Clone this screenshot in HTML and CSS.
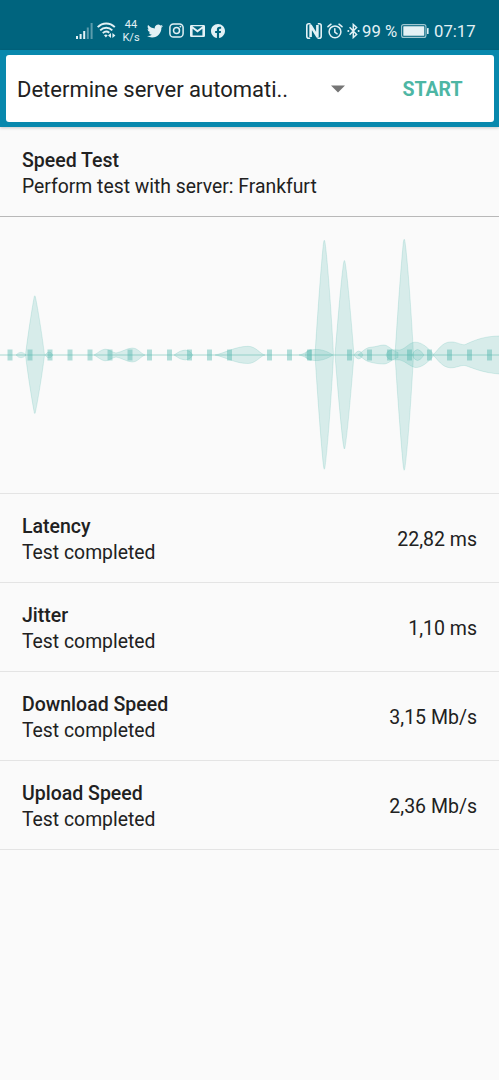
FILE: index.html
```html
<!DOCTYPE html>
<html lang="en">

<head>
  <meta charset="UTF-8">
  <meta name="viewport" content="width=device-width,initial-scale=1.0">
  <title>Speed Test</title>
  <link rel="stylesheet" href="styles.css">
</head>

<body>
  <div class="status-bar">
    <div class="status-left">
      <svg class="signal" width="17" height="16" viewBox="0 0 17 16">
        <path d="M0 13h2v3H0zM3.6 11h2v5h-2zM7.2 8h2v8h-2z" />
        <path d="M10.8 4.5h2V16h-2zM14.6 0h2v16h-2z" opacity=".4" />
      </svg>
      <svg class="wifi" width="19" height="17" viewBox="0 0 19 17">
        <g fill="none" stroke="currentColor" stroke-width="1.9">
          <path d="M.7 5.2C5.5.3 12.9.3 17.8 5.2" />
          <path d="M3.2 8.3c3.5-3.5 8.6-3.5 12.1 0" />
          <path d="M5.8 11.2c2-2 4.6-2 6.5-.5" />
        </g>
        <path d="M7 13.3c1.2-1.2 2.5-1.2 3.7 0l-1.8 2.2zM14 11v5l-3-2.5zM15.4 11v5l3-2.5z" />
      </svg>
      <div class="net-speed"><span>44</span><span>K/s</span></div>
      <svg class="twitter" width="16" height="14" viewBox="0 2 24 20">
        <path d="M23.95 4.57a10 10 0 0 1-2.82.77 4.96 4.96 0 0 0 2.16-2.72c-.95.55-2 .96-3.13 1.18a4.92 4.92 0 0 0-8.38 4.48C7.69 8.1 4.07 6.13 1.64 3.16a4.82 4.82 0 0 0-.67 2.48c0 1.7.87 3.2 2.19 4.1a4.9 4.9 0 0 1-2.23-.62v.06a4.92 4.92 0 0 0 3.95 4.83 5 5 0 0 1-2.21.08 4.94 4.94 0 0 0 4.6 3.42A9.87 9.87 0 0 1 0 19.54a14 14 0 0 0 7.55 2.21c9.05 0 14-7.5 14-13.98 0-.21 0-.42-.02-.63a9.94 9.94 0 0 0 2.46-2.55z" />
      </svg>
      <svg class="instagram" width="15" height="15" viewBox="0 0 15 15">
        <g fill="none" stroke="currentColor" stroke-width="1.5">
          <rect x=".9" y=".9" width="13.2" height="13.2" rx="3.6" />
          <circle cx="7.5" cy="7.5" r="3" />
        </g>
        <circle cx="11.4" cy="3.6" r=".95" />
      </svg>
      <svg class="gmail" width="15" height="12" viewBox="0 0 15 12">
        <path fill-rule="evenodd" d="M1.3 0h12.4Q15 0 15 1.3v9.4q0 1.3-1.3 1.3H1.3Q0 12 0 10.7V1.3Q0 0 1.3 0zM2.4 1.2l5.1 3.9 5.1-3.9zM2.6 3.7v6.8h9.8V3.7L7.5 7.4z" />
      </svg>
      <svg class="facebook" width="14" height="14" viewBox="0 0 24 24">
        <path d="M24 12.07C24 5.4 18.6 0 12 0S0 5.4 0 12.07c0 6.03 4.39 11.02 10.13 11.93v-8.44H7.08v-3.49h3.05V9.41c0-3.02 1.79-4.69 4.53-4.69 1.31 0 2.68.24 2.68.24v2.97h-1.51c-1.49 0-1.96.93-1.96 1.89v2.25h3.33l-.53 3.49h-2.8V24C19.61 23.1 24 18.1 24 12.07z" />
      </svg>
    </div>
    <div class="status-right">
      <svg class="nfc" width="16" height="16" viewBox="0 0 16 16">
        <g fill="none" stroke="currentColor">
          <path stroke-width="1.6" d="M4.2 15.2H2.8Q.8 15.2.8 13.2V2.8Q.8.8 2.8.8H4.5M11.8.8h1.4q2 0 2 2v10.4q0 2-2 2H11.5" />
          <path stroke-width="2.6" stroke-linejoin="round" d="M4.6 14V2.5L11.4 13.5V2" />
        </g>
      </svg>
      <svg class="alarm" width="16" height="16" viewBox="0 0 16 16">
        <g fill="none" stroke="currentColor" stroke-width="1.5" stroke-linecap="round">
          <circle cx="8" cy="8.8" r="5.9" />
          <path d="M7.8 5.7v3.4l2.3 1.7M1 3.7L4 1.2M15 3.7L12 1.2" />
        </g>
      </svg>
      <svg class="bluetooth" width="13" height="16" viewBox="0 0 13 16">
        <path fill="none" stroke="currentColor" stroke-width="1.5" d="M2.6 4.3l7 7.2-3.3 3V1.5l3.3 3-7 7.2" />
        <circle cx="1.3" cy="8" r="1" />
        <circle cx="11.6" cy="8" r="1" />
      </svg>
      <span class="battery-level">99 %</span>
      <svg class="battery" width="28" height="14" viewBox="0 0 28 14">
        <rect x=".6" y=".6" width="24.3" height="12.8" rx="2" fill="none" stroke="currentColor" stroke-width="1.1" opacity=".7" />
        <rect x="2.3" y="2.3" width="21" height="9.4" rx=".5" />
        <rect x="26" y="4" width="1.6" height="6" rx=".5" />
      </svg>
      <span class="time">07:17</span>
    </div>
  </div>

  <div class="toolbar">
    <div class="server-card">
      <span class="server-name">Determine server automati..</span>
      <svg class="arrow" width="14" height="8" viewBox="0 0 14 8">
        <path d="M0 .5h14L7 7.5z" />
      </svg>
      <button class="start-button">START</button>
    </div>
  </div>

  <div class="intro">
    <div class="title">Speed Test</div>
    <div class="text">Perform test with server: Frankfurt</div>
  </div>

  <svg class="chart" width="499" height="276" viewBox="0 217 499 276">
    <path class="axis" d="M0 355H499" />
    <!-- sample markers -->
    <path class="marker" d="M10 349.5v11M30 349.5v11M50 349.5v11M70 349.5v11M90 349.5v11M110 349.5v11M130 349.5v11M149.5 349.5v11M169.5 349.5v11M189.5 349.5v11M209.5 349.5v11M229.5 349.5v11M269.5 349.5v11M289.5 349.5v11M309.5 349.5v11M349.5 349.5v11M369.5 349.5v11M389.5 349.5v11M409.5 349.5v11M429.5 349.5v11M449.5 349.5v11M469.5 349.5v11M489.5 349.5v11" />
    <!-- peaks -->
    <g class="wave">
      <path d="M25.5 355C28 334 32.3 307 34 298Q34.8 293.5 35.6 298C37.5 307 42 334 44.5 355C42 376 37.5 402 35.6 411Q34.8 416 34 411C32.3 402 28 376 25.5 355z" />
      <path d="M315 355C317.5 315 321.5 260 323.5 243Q324.3 237.5 325.1 243C327.5 260 331.5 315 333.5 355C331.5 395 327.5 449 325.1 466Q324.3 472.5 323.5 466C321.5 449 317.5 395 315 355z" />
      <path d="M335 355C337.5 324 341.5 276 343.6 263Q344.4 258 345.2 263C347.5 276 351.5 324 354 355C351.5 386 347.5 433 345.2 446Q344.4 452 343.6 446C341.5 433 337.5 386 335 355z" />
      <path d="M395 355C397.5 315 401.5 259 403.4 242Q404.2 236.5 405 242C407.5 259 411.5 315 413.5 355C411.5 395 407.5 450 405 467Q404.2 473.5 403.4 467C401.5 450 397.5 395 395 355z" />
    </g>
    <!-- low level signal -->
    <g class="wave">
      <path d="M16 355Q21 349.5 26 355Q21 360.5 16 355z" />
      <path d="M45 355Q49 349 53 355Q49 361 45 355z" />
      <path d="M94 355C98 353 101 349.5 105 349.2C109 349 111 352 116 353C122 352 126 348.5 132 348C138 348 140 353 145 355C140 357 138 362 132 362C126 361.5 122 358 116 357C111 358 109 361 105 360.8C101 360.5 98 357 94 355z" />
      <path d="M174 355Q187 345 193 355Q187 365 174 355z" />
      <path d="M215 355C225 353 235 346.5 248 346.3C256 346.3 260 354 265 355C260 356 256 363.5 248 363.5C235 363.5 225 357 215 355z" />
      <path d="M299 355C306 353.5 308 350 314 349.5C323 349 328 352 333 355C328 358 323 361 314 360.5C308 360 306 356.5 299 355z" />
      <path d="M305.5 355Q306 349.5 311 349.7V360.3Q306 360.5 305.5 355z" />
      <path d="M354 355Q359 347 363 355Q359 363 354 355z" />
      <path d="M358 355C364 350 366 348 370 347.3C376 347 380 345 384 345C389 345.5 391 350 398 352.5L398 357.5C391 360 389 363.5 384 364C378 364 373 363 368 361.5C364 360 362 357 358 355z" />
      <path d="M386 355C388 348 393 350.3 400 350C406 348.5 409 342.5 415 342.2C422 342 428 348 433 353.5V356.5C428 362 422 368 415 367.5C409 366 406 361.5 400 360C393 359.5 388 361 386 355z" />
      <path d="M412 355Q417 344 424 355Q417 366 412 355z" />
      <path d="M433 355C438 350 442 342.5 450 342C457 341.5 460 345 465 344.7C473 341 483 336 500 336V374C483 373 473 368 465 365.5C460 365 457 368 450 367.8C442 367 438 360 433 355z" />
    </g>
  </svg>

  <div class="results">
    <div class="result">
      <div>
        <div class="title">Latency</div>
        <div class="text">Test completed</div>
      </div>
      <div class="value">22,82 ms</div>
    </div>
    <div class="result">
      <div>
        <div class="title">Jitter</div>
        <div class="text">Test completed</div>
      </div>
      <div class="value">1,10 ms</div>
    </div>
    <div class="result">
      <div>
        <div class="title">Download Speed</div>
        <div class="text">Test completed</div>
      </div>
      <div class="value">3,15 Mb/s</div>
    </div>
    <div class="result">
      <div>
        <div class="title">Upload Speed</div>
        <div class="text">Test completed</div>
      </div>
      <div class="value">2,36 Mb/s</div>
    </div>
  </div>
</body>

</html>
```
FILE: styles.css
```css
* {
  box-sizing: border-box;
}

body {
  margin: 0;
  min-height: 100vh;
  background: #fafafa;
  color: #212121;
  font-family: Roboto, "Liberation Sans", sans-serif;
}

svg {
  display: block;
  flex: none;
  fill: currentColor;
}

/* status bar */
.status-bar {
  display: flex;
  justify-content: space-between;
  height: 50px;
  padding: 12px 24px 0 76px;
  background: #00647e;
  color: #e3f1f5;
}

.status-left,
.status-right {
  display: flex;
  align-items: center;
  height: 38px;
  padding-bottom: 1px;
}

.wifi {
  margin-left: 4px;
}

.net-speed {
  display: flex;
  flex-direction: column;
  width: 24px;
  margin: 0 4px 0 3px;
  font-size: 11px;
  line-height: 13px;
  text-align: center;
}

.instagram,
.gmail,
.facebook {
  margin-left: 6px;
}

.alarm {
  margin-left: 5px;
}

.bluetooth {
  margin-left: 4px;
}

.battery-level,
.time {
  padding-top: 1px;
  font-size: 16.7px;
  white-space: nowrap;
}

.battery-level {
  width: 35px;
  margin-left: 2px;
}

.battery {
  margin-left: 4px;
}

.time {
  width: 41px;
  margin-left: 5px;
}

/* toolbar */
.toolbar {
  height: 77px;
  padding: 5px 5px 5px 6px;
  background: #0888ad;
  box-shadow: 0 1px 3px rgba(0, 0, 0, 0.2);
}

.server-card {
  display: flex;
  align-items: center;
  height: 67px;
  padding-left: 11px;
  border-radius: 3px;
  background: #fff;
}

.server-name {
  width: 314px;
  padding-top: 2px;
  font-size: 22px;
  white-space: nowrap;
}

.arrow {
  margin-top: 1px;
  color: #757575;
}

.start-button {
  flex: 1;
  height: 100%;
  padding: 2px 0 0 26px;
  border: 0;
  background: none;
  color: #4db6a4;
  font: bold 19.5px Roboto, "Liberation Sans", sans-serif;
}

/* text */
.intro {
  height: 90px;
  padding: 21px 22px 0;
  border-bottom: 1px solid #b8b8b8;
}

.title,
.text,
.value {
  font-size: 19.5px;
  line-height: 26px;
}

.title {
  font-weight: 500;
}

.text {
  font-size: 19.35px;
}

/* chart */
.axis {
  stroke: #a5d8d0;
  stroke-width: 1.2;
}

.marker {
  fill: none;
  stroke: #4db6ac;
  stroke-width: 5;
  opacity: 0.42;
}

.wave {
  fill: rgba(77, 182, 172, 0.2);
  stroke: rgba(77, 182, 172, 0.28);
  stroke-width: 0.7;
}

/* results */
.results {
  border-top: 1px solid #e4e4e4;
}

.result {
  display: flex;
  align-items: center;
  justify-content: space-between;
  height: 89.1px;
  padding: 3px 22px 0;
  border-bottom: 1px solid #e4e4e4;
}
```
